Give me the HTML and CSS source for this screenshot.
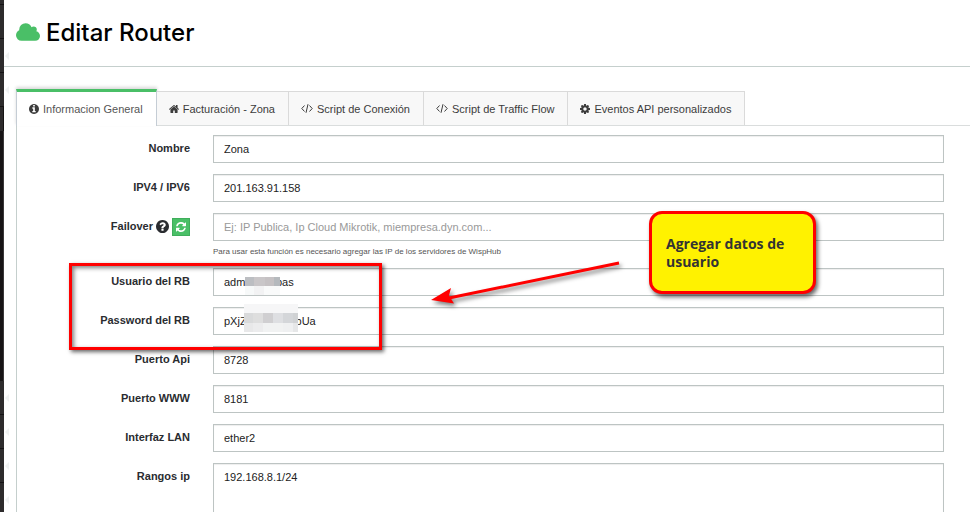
FILE: index.html
```
<!DOCTYPE html>
<html lang="es">
<head>
  <meta charset="UTF-8" />
  <title>Editar Router</title>
  <meta name="viewport" content="width=device-width, initial-scale=1.0" />
  <link rel="stylesheet" href="styles.css">
</head>
<body>
  <!-- icon set -->
  <svg class="sprite" aria-hidden="true">
    <symbol id="i-cloud" viewBox="64 128 1920 1408"><path d="M1984 1152q0 159-112.500 271.500t-271.500 112.500h-1088q-185 0-316.500-131.500t-131.500-316.500q0-132 71-241.500t187-163.500q-2-28-2-43 0-212 150-362t362-150q158 0 286.500 88t187.500 230q70-62 166-62 106 0 181 75t75 181q0 75-41 138 129 30 213 134.500t84 239.500z"/></symbol>
    <symbol id="i-info" viewBox="128 128 1536 1536"><path d="M1152 1376v-160q0-14-9-23t-23-9h-96v-512q0-14-9-23t-23-9h-320q-14 0-23 9t-9 23v160q0 14 9 23t23 9h96v320h-96q-14 0-23 9t-9 23v160q0 14 9 23t23 9h448q14 0 23-9t9-23zm-128-896v-160q0-14-9-23t-23-9h-192q-14 0-23 9t-9 23v160q0 14 9 23t23 9h192q14 0 23-9t9-23zm640 416q0 209-103 385.500t-279.500 279.500-385.500 103-385.500-103-279.500-279.500-103-385.500 103-385.500 279.500-279.500 385.500-103 385.500 103 279.500 279.500 103 385.500z"/></symbol>
    <symbol id="i-home" viewBox="90 128 1612 1536"><path d="M1472 992v480q0 26-19 45t-45 19h-384v-384h-256v384h-384q-26 0-45-19t-19-45v-480q0-1 .5-3t.5-3l575-474 575 474q1 2 1 6zm223-69l-62 74q-8 9-21 11h-3q-13 0-21-7l-692-577-692 577q-12 8-24 7-13-2-21-11l-62-74q-8-10-7-23.500t11-21.500l719-599q32-26 76-26t76 26l244 204v-195q0-14 9-23t23-9h192q14 0 23 9t9 23v408l219 182q10 8 11 21.500t-7 23.500z"/></symbol>
    <symbol id="i-code" viewBox="0 0 12 11"><path d="M3.500 2.500L.8 5.500l2.700 3M8.500 2.500l2.700 3-2.700 3M7 1.200L5 9.800" fill="none" stroke="currentColor"/></symbol>
    <symbol id="i-cog" viewBox="128 128 1536 1536"><path d="M1152 896q0-106-75-181t-181-75-181 75-75 181 75 181 181 75 181-75 75-181zm512-109v222q0 12-8 23t-20 13l-185 28q-19 54-39 91 35 50 107 138 10 12 10 25t-9 23q-27 37-99 108t-94 71q-12 0-26-9l-138-108q-44 23-91 38-16 136-29 186-7 28-36 28h-222q-14 0-24.500-8.500t-11.500-21.500l-28-184q-49-16-90-37l-141 107q-10 9-25 9-14 0-25-11-126-114-165-168-7-10-7-23 0-12 8-23 15-21 51-66.500t54-70.500q-27-50-41-99l-183-27q-13-2-21-12.500t-8-23.500v-222q0-12 8-23t19-13l186-28q14-46 39-92-40-57-107-138-10-12-10-24 0-10 9-23 26-36 98.500-107.500t94.500-71.500q13 0 26 10l138 107q44-23 91-38 16-136 29-186 7-28 36-28h222q14 0 24.500 8.500t11.500 21.500l28 184q49 16 90 37l142-107q9-9 24-9 13 0 25 10 129 119 165 170 7 8 7 22 0 12-8 23-15 21-51 66.500t-54 70.500q26 50 41 98l183 28q13 2 21 12.500t8 23.500z"/></symbol>
    <symbol id="i-help" viewBox="128 128 1536 1536"><path d="M1024 1376v-192q0-14-9-23t-23-9h-192q-14 0-23 9t-9 23v192q0 14 9 23t23 9h192q14 0 23-9t9-23zm256-672q0-88-55.500-163t-138.500-116-170-41q-243 0-371 213-15 24 8 42l132 100q7 6 19 6 16 0 25-12 53-68 86-92 34-24 86-24 48 0 85.500 26t37.500 59q0 38-20 61t-68 45q-63 28-115.500 86.500t-52.500 125.500v36q0 14 9 23t23 9h192q14 0 23-9t9-23q0-19 21.500-49.500t54.500-49.500q32-18 49-28.500t46-35 44.500-48 28-60.500 12.500-81zm384 192q0 209-103 385.500t-279.500 279.500-385.500 103-385.500-103-279.500-279.500-103-385.500 103-385.500 279.500-279.500 385.500-103 385.500 103 279.500 279.500 103 385.500z"/></symbol>
    <symbol id="i-refresh" viewBox="128 128 1536 1536"><path d="M1639 1056q0 5-1 7-64 268-268 434.500t-478 166.500q-146 0-282.500-55t-243.500-157l-129 129q-19 19-45 19t-45-19-19-45v-448q0-26 19-45t45-19h448q26 0 45 19t19 45-19 45l-137 137q71 66 161 102t187 36q134 0 250-65t186-179q11-17 53-117 8-23 30-23h192q13 0 22.500 9.500t9.500 22.500zm25-800v448q0 26-19 45t-45 19h-448q-26 0-45-19t-19-45 19-45l138-138q-148-137-349-137-134 0-250 65t-186 179q-11 17-53 117-8 23-30 23h-199q-13 0-22.500-9.500t-9.500-22.500v-7q65-268 270-434.500t480-166.500q146 0 284 55.500t245 156.500l130-129q19-19 45-19t45 19 19 45z"/></symbol>
  </svg>

  <!-- collapsed side menu -->
  <aside class="rail">
    <div class="rail-top"></div>
    <div class="rail-item"></div>
    <div class="rail-item arrow-left"></div>
    <div class="rail-item arrow-left"></div>
    <div class="rail-current"></div>
    <div class="rail-open"></div>
    <div class="rail-item arrow-left"></div>
    <div class="rail-item arrow-left"></div>
    <div class="rail-item arrow-left"></div>
    <div class="rail-item arrow-left"></div>
  </aside>

  <main class="page">
    <header class="page-header">
      <svg class="cloud"><use href="#i-cloud"/></svg>
      <h1>Editar Router</h1>
    </header>

    <nav class="tabs">
      <a class="tab active" href="#general"><svg class="icon"><use href="#i-info"/></svg>Informacion General</a>
      <a class="tab" href="#zona"><svg class="icon"><use href="#i-home"/></svg>Facturación - Zona</a>
      <a class="tab" href="#conexion"><svg class="icon code"><use href="#i-code"/></svg>Script de Conexión</a>
      <a class="tab" href="#traffic"><svg class="icon code"><use href="#i-code"/></svg>Script de Traffic Flow</a>
      <a class="tab" href="#eventos"><svg class="icon"><use href="#i-cog"/></svg>Eventos API personalizados</a>
    </nav>

    <form class="panel" id="general">
      <div class="row">
        <label for="nombre">Nombre</label>
        <div class="field"><input type="text" id="nombre" value="Zona" /></div>
      </div>
      <div class="row">
        <label for="ip">IPV4 / IPV6</label>
        <div class="field"><input type="text" id="ip" value="201.163.91.158" /></div>
      </div>
      <div class="row">
        <div class="label-group">
          <label for="failover">Failover</label>
          <svg class="help"><use href="#i-help"/></svg>
          <button class="refresh" type="button" aria-label="Actualizar"><svg><use href="#i-refresh"/></svg></button>
        </div>
        <div class="field">
          <input type="text" id="failover" placeholder="Ej: IP Publica, Ip Cloud Mikrotik, miempresa.dyn.com..." />
          <p class="hint">Para usar esta función es necesario agregar las IP de los servidores de WispHub</p>
        </div>
      </div>

      <div class="credentials">
        <div class="row">
          <label for="usuario">Usuario del RB</label>
          <div class="field">
            <input type="text" id="usuario" value="adm&nbsp;&nbsp;&nbsp;&nbsp;&nbsp;&nbsp;&nbsp;&nbsp;&nbsp;&nbsp;bas" />
            <svg class="mask mask-user" viewBox="0 0 35 18" shape-rendering="crispEdges">
              <path fill="#bcbec2" d="M0 0h9v9H0z"/><path fill="#c9c6c8" d="M9 0h11v9H9z"/><path fill="#c5c1c3" d="M20 0h9v9h-9z"/><path fill="#b5b9bd" d="M29 0h6v9h-6z"/>
              <path fill="#f7f9f9" d="M0 9h9v9H0z"/><path fill="#f2f2f3" d="M9 9h10v9H9z"/><path fill="#f9fafa" d="M19 9h16v9H19z"/>
            </svg>
          </div>
        </div>
        <div class="row">
          <label for="password">Password del RB</label>
          <div class="field">
            <input type="text" id="password" value="pXjZ&nbsp;&nbsp;&nbsp;&nbsp;&nbsp;&nbsp;&nbsp;&nbsp;&nbsp;&nbsp;&nbsp;&nbsp;&nbsp;&nbsp;&nbsp;&nbsp;bUa" />
            <svg class="mask mask-pass" viewBox="0 0 54 28" shape-rendering="crispEdges">
              <path fill="#f6f6f7" d="M0 0h54v9H0z"/>
              <path fill="#d9dadb" d="M0 9h9v10H0z"/><path fill="#dedede" d="M9 9h10v10H9z"/><path fill="#d0cfd1" d="M19 9h10v10H19z"/><path fill="#dedfe2" d="M29 9h10v10H29z"/><path fill="#d4d6d9" d="M39 9h10v10H39z"/><path fill="#d0d2d4" d="M49 9h5v10h-5z"/>
              <path fill="#e8e8e9" d="M0 19h9v9H0z"/><path fill="#ececed" d="M9 19h10v9H9z"/><path fill="#f1f2f2" d="M19 19h20v9H19z"/><path fill="#eff0f1" d="M39 19h10v9H39z"/><path fill="#e6e7e8" d="M49 19h5v9h-5z"/>
            </svg>
          </div>
        </div>
        <div class="frame"></div>
        <svg class="arrow" viewBox="0 0 200 56">
          <path d="M196 8L26 43" stroke="#f00" stroke-width="3"/>
          <path d="M8 45l20-12-2 7.500 5 8z" fill="#f00"/>
        </svg>
        <div class="callout">Agregar datos de usuario</div>
      </div>

      <div class="row">
        <label for="api">Puerto Api</label>
        <div class="field"><input type="text" id="api" value="8728" /></div>
      </div>
      <div class="row">
        <label for="www">Puerto WWW</label>
        <div class="field"><input type="text" id="www" value="8181" /></div>
      </div>
      <div class="row">
        <label for="lan">Interfaz LAN</label>
        <div class="field"><input type="text" id="lan" value="ether2" /></div>
      </div>
      <div class="row">
        <label for="rangos">Rangos ip</label>
        <div class="field"><textarea id="rangos" rows="4">192.168.8.1/24</textarea></div>
      </div>
    </form>
  </main>
</body>
</html>
```
FILE: styles.css
```
* {
  box-sizing: border-box;
}

body {
  display: flex;
  height: 100vh;
  margin: 0;
  overflow: hidden;
  background: #fff;
  color: #2a2c30;
  font-family: "Liberation Sans", Arial, sans-serif;
  font-size: 11px;
}

.sprite {
  position: absolute;
  width: 0;
  height: 0;
}

svg {
  fill: currentColor;
}

/* side menu */
.rail {
  flex: 0 0 4px;
  background: #2d2b2c;
}

.rail-top {
  height: 5px;
  border-bottom: 1px solid #151314;
}

.rail-item {
  position: relative;
  height: 34px;
  border-bottom: 1px solid #151314;
}

.rail-item.arrow-left::after {
  content: "";
  position: absolute;
  left: 5px;
  top: 13px;
  border: 4px solid transparent;
  border-left: 0;
  border-right-color: #f0f2f2;
}

.rail-current {
  height: 24px;
  border-right: 1px solid #151314;
}

.rail-open {
  height: 250px;
  border-right: 1px solid #3a3839;
  background: #171415;
}

.page {
  flex: 1;
  min-width: 0;
}

.page-header {
  display: flex;
  align-items: center;
  gap: 6px;
  height: 67px;
  padding: 0 12px 2px;
  border-bottom: 1px solid #c5cfcd;
}

.cloud {
  width: 24px;
  height: 18px;
  color: #4abf67;
}

h1 {
  margin: 0;
  color: #000;
  font-family: Inter, sans-serif;
  font-size: 24px;
  font-weight: 500;
}

/* tabs */
.tabs {
  display: flex;
  align-items: flex-end;
  margin: 22px 0 0 12px;
  border-bottom: 1px solid #dadddd;
}

.tab {
  display: flex;
  align-items: center;
  gap: 4px;
  height: 34px;
  padding: 0 13px 0 12px;
  border: 1px solid #dadada;
  border-width: 1px 1px 0 0;
  background: #f8f8f8;
  color: #3c3c3c;
  font-size: 11px;
  text-decoration: none;
  white-space: nowrap;
}

.tab.active {
  height: 37px;
  margin-bottom: -1px;
  border: 1px solid #c5cdd5;
  border-top: 3px solid #4abf67;
  border-bottom: 0;
  background: #fff;
  color: #555;
  box-shadow: 0 -2px 3px rgba(0, 0, 0, 0.15);
}

.icon {
  width: 10px;
  height: 10px;
  color: #3c3c3c;
}

.icon.code {
  width: 12px;
  height: 11px;
}

/* form */
.panel {
  display: flex;
  flex-direction: column;
  gap: 11px;
  margin-left: 12px;
  padding: 9px 26px 20px 0;
  border-left: 1px solid #c5cfcd;
}

.row {
  display: flex;
  gap: 23px;
}

.row > label,
.label-group {
  flex: 0 0 173px;
  height: 27px;
  line-height: 27px;
  font-weight: bold;
  text-align: right;
}

.label-group {
  display: flex;
  align-items: center;
  justify-content: flex-end;
  gap: 3px;
}

.help {
  width: 13px;
  height: 13px;
}

.refresh {
  display: flex;
  align-items: center;
  justify-content: center;
  width: 18px;
  height: 18px;
  padding: 0;
  border: 1px solid #3fae5b;
  background: #4abf67;
  color: #fff;
}

.refresh svg {
  width: 10px;
  height: 10px;
}

.field {
  position: relative;
  flex: 1;
}

input,
textarea {
  display: block;
  width: 100%;
  height: 28px;
  padding: 0 10px;
  border: 1px solid #bdc4c3;
  border-radius: 0;
  box-shadow: inset 0 1px 1px rgba(0, 0, 0, 0.07);
  background: #fff;
  color: #222;
  font: inherit;
}

textarea {
  height: 70px;
  padding-top: 7px;
  resize: none;
}

input::placeholder {
  color: #999;
}

.hint {
  margin: 6px 0 0;
  color: #555;
  font-size: 8px;
  line-height: 10px;
}

/* annotations over the credentials */
.credentials {
  position: relative;
  z-index: 1;
  display: flex;
  flex-direction: column;
  gap: 11px;
}

.mask {
  position: absolute;
}

.mask-user {
  left: 32px;
  top: 9px;
  width: 35px;
  height: 18px;
}

.mask-pass {
  left: 31px;
  top: -3px;
  width: 54px;
  height: 28px;
}

.frame {
  position: absolute;
  left: 52px;
  top: -5px;
  width: 313px;
  height: 87px;
  border: 3px solid #f00;
  box-shadow: 2px 2px 4px rgba(0, 0, 0, 0.6), inset 2px 2px 4px rgba(0, 0, 0, 0.5);
  pointer-events: none;
}

.arrow {
  position: absolute;
  left: 406px;
  top: -13px;
  width: 200px;
  height: 56px;
  filter: drop-shadow(2px 3px 2px rgba(0, 0, 0, 0.5));
}

.callout {
  position: absolute;
  left: 632px;
  top: -57px;
  display: flex;
  align-items: center;
  width: 167px;
  height: 83px;
  padding: 0 14px;
  border: 3px solid #f00;
  border-radius: 13px;
  background: #fff200;
  box-shadow: 2px 3px 4px rgba(0, 0, 0, 0.6);
  color: #333;
  font-family: "Open Sans", sans-serif;
  font-size: 14px;
  font-weight: bold;
  line-height: 18px;
}
```
